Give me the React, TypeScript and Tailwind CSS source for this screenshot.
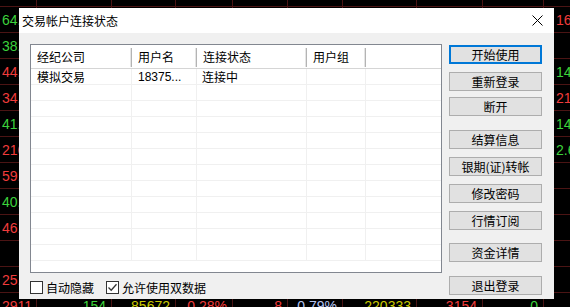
import React from 'react';

const RED = 'text-[#f03c3c]';
const GREEN = 'text-[#3cd23c]';
const YELLOW = 'text-[#c8c800]';
const PALE = 'text-[#b4c4f0]';

// widths of the quote table columns behind the dialog
const colWidths = [
  'w-[37px]',
  'w-[75px]',
  'w-[64px]',
  'w-[57px]',
  'w-[55px]',
  'w-[55px]',
  'w-[74px]',
  'w-[66px]',
  'w-[61px]',
  'w-[40px]',
];

type Cell = { text: string; color: string };

const cell = (text: string, color: string): Cell => ({ text, color });

// only the first and last columns show past the dialog
const quoteRows: { first: Cell; last: Cell }[] = [
  { first: cell('64.82', GREEN), last: cell('16.25', RED) },
  { first: cell('38.15', GREEN), last: cell('', '') },
  { first: cell('44.60', RED), last: cell('14.32', GREEN) },
  { first: cell('34.27', RED), last: cell('21.08', RED) },
  { first: cell('41.93', GREEN), last: cell('14.56', GREEN) },
  { first: cell('216.5', RED), last: cell('2.65', GREEN) },
  { first: cell('59.08', RED), last: cell('', '') },
  { first: cell('40.77', GREEN), last: cell('', '') },
  { first: cell('46.31', RED), last: cell('', '') },
  { first: cell('', ''), last: cell('', '') },
  { first: cell('25.64', RED), last: cell('', '') },
];

const bottomRow: Cell[] = [
  cell('2911', RED),
  cell('154', GREEN),
  cell('85672', YELLOW),
  cell('0.28%', RED),
  cell('8', RED),
  cell('0.79%', PALE),
  cell('220333', YELLOW),
  cell('3154', RED),
  cell('0', GREEN),
  cell('', ''),
];

const QuoteRow: React.FC<{ cells: Cell[] }> = ({ cells }) => (
  <div className="flex h-[26px] shrink-0 border-b border-[#4b1414]">
    {colWidths.map((w, i) => (
      <div
        key={i}
        className={`${w} flex shrink-0 items-center overflow-hidden whitespace-nowrap border-r border-[#4b1414] ${
          i === 9 ? 'justify-start pl-[12px]' : i === 0 ? 'justify-start pl-[2px]' : 'justify-end pr-[5px]'
        } ${cells[i]?.color ?? ''}`}
      >
        {cells[i]?.text}
      </div>
    ))}
  </div>
);

const columns = [
  { title: '经纪公司', w: 'w-[101px]' },
  { title: '用户名', w: 'w-[65px]' },
  { title: '连接状态', w: 'w-[110px]' },
  { title: '用户组', w: 'w-[59px]' },
];

const accounts = [{ broker: '模拟交易', user: '18375...', status: '连接中', group: '' }];

const buttons = [
  { label: '开始使用', mt: 'mt-[1px]' },
  { label: '重新登录', mt: 'mt-[8px]' },
  { label: '断开', mt: 'mt-[6px]' },
  { label: '结算信息', mt: 'mt-[14px]' },
  { label: '银期(证)转帐', mt: 'mt-[8px]' },
  { label: '修改密码', mt: 'mt-[8px]' },
  { label: '行情订阅', mt: 'mt-[8px]' },
  { label: '资金详情', mt: 'mt-[13px]' },
  { label: '退出登录', mt: 'mt-[14px]' },
];

const Checkbox: React.FC<{ label: string; checked?: boolean }> = ({ label, checked }) => (
  <label className="flex items-center gap-[3px]">
    <span className="flex h-[13px] w-[13px] items-center justify-center border border-[#333333] bg-white">
      {checked && (
        <svg width="11" height="11" viewBox="0 0 11 11">
          <path d="M1.5 5.5 L4.2 8.2 L9.5 2.2" fill="none" stroke="#333333" strokeWidth="1.3" />
        </svg>
      )}
    </span>
    <span>{label}</span>
  </label>
);

export default function App() {
  const emptyRows = Array.from({ length: 12 });

  return (
    <div className="relative h-[307px] w-[570px] overflow-hidden bg-black font-['Liberation_Sans','Noto_Sans_CJK_SC',sans-serif] text-[14px] leading-none">
      {/* quote table behind the dialog */}
      <div className="flex flex-col">
        <div className="flex h-[7px] shrink-0 border-b border-[#4b1414]">
          {colWidths.map((w, i) => (
            <div key={i} className={`${w} shrink-0 border-r border-[#4b1414]`} />
          ))}
        </div>
        {quoteRows.map((r, i) => (
          <QuoteRow
            key={i}
            cells={[r.first, ...Array.from({ length: 8 }, () => cell('', '')), r.last]}
          />
        ))}
        <QuoteRow cells={bottomRow} />
      </div>

      {/* account connection dialog */}
      <div className="absolute left-[19px] top-[8px] flex h-[291px] w-[535px] flex-col bg-[#f0f0f0] font-['Noto_Sans_CJK_SC',sans-serif] text-[12px] text-black">
        <div className="flex h-[25px] shrink-0 items-center justify-between bg-white pl-[3px] pr-[11px]">
          <span>交易帐户连接状态</span>
          <svg width="11" height="11" viewBox="0 0 11 11">
            <path d="M0.5 0.5 L10.5 10.5 M10.5 0.5 L0.5 10.5" stroke="#000" strokeWidth="1" />
          </svg>
        </div>

        <div className="flex flex-1 pl-[11px] pr-[12px] pt-[11px]">
          <div className="flex w-[412px] flex-col">
            <div className="flex h-[229px] flex-col overflow-hidden border border-[#828790] bg-white">
              <div className="flex h-[24px] shrink-0 border-b border-[#d5d5d5]">
                {columns.map((c) => (
                  <div
                    key={c.title}
                    className={`${c.w} relative flex shrink-0 items-center pl-[6px]`}
                  >
                    {c.title}
                    <span className="absolute right-0 top-[3px] h-[19px] w-[2px] border-l border-r border-l-[#e5e5e5] border-r-[#b4b4b4]" />
                  </div>
                ))}
              </div>
              {emptyRows.map((_, i) => {
                const a = accounts[i];
                return (
                  <div key={i} className="flex h-[16px] shrink-0 border-b border-[#f0f0f0]">
                    <div className="flex w-[101px] shrink-0 items-center border-r border-[#f0f0f0] pl-[6px]">
                      {a?.broker}
                    </div>
                    <div className="flex w-[65px] shrink-0 items-center border-r border-[#f0f0f0] pl-[6px] font-['Liberation_Sans',sans-serif]">
                      {a?.user}
                    </div>
                    <div className="flex w-[110px] shrink-0 items-center border-r border-[#f0f0f0] pl-[5px]">
                      {a?.status}
                    </div>
                    <div className="flex w-[59px] shrink-0 items-center border-r border-[#f0f0f0] pl-[5px]">
                      {a?.group}
                    </div>
                  </div>
                );
              })}
            </div>

            <div className="mt-[8px] flex items-center gap-[12px]">
              <Checkbox label="自动隐藏" />
              <Checkbox label="允许使用双数据" checked />
            </div>
          </div>

          <div className="ml-[7px] flex w-[93px] flex-col">
            {buttons.map((b, i) => (
              <button
                key={b.label}
                className={`${b.mt} flex h-[19px] items-center justify-center bg-[#e1e1e1] ${
                  i === 0 ? 'border-2 border-[#0078d7]' : 'border border-[#adadad]'
                }`}
              >
                {b.label}
              </button>
            ))}
          </div>
        </div>
      </div>
    </div>
  );
}
